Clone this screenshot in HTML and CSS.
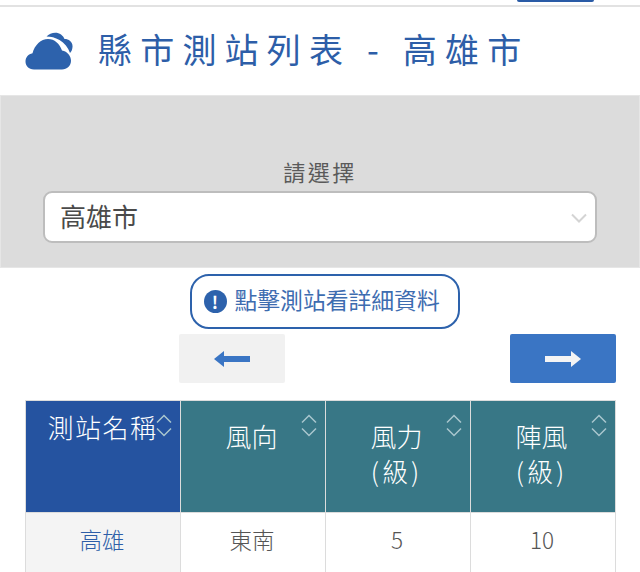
FILE: index.html
```html
<!DOCTYPE html>
<html lang="zh-Hant">
<head>
  <meta charset="UTF-8">
  <title>縣市測站列表 - 高雄市</title>
  <link rel="stylesheet" href="styles.css">
</head>
<body>
  <div class="topbar"><span class="topbar-tab"></span></div>

  <header class="page-head">
    <svg class="cloud" width="48" height="38" viewBox="0 0 48 38">
      <path d="M9 37.500C3.500 37.500 .5 33.500 .5 29.500C.5 25.500 3.500 22 7.500 21.300C9.500 13 16 7 23 7C29.500 7 34.500 11.500 37 18.500C42.500 19.500 46 24 46 28.800C46 34 42 37.500 37 37.500Z"/>
      <path d="M21.500 4.500C25 .5 32 -.5 36 2.500C38 4 39 5.500 39.500 7C44 7 48 10 47.500 15C47.300 17.500 46.500 19.500 45 21C43 15.500 39.500 11 34.500 8C30 5.500 26 4.500 21.500 4.500Z"/>
    </svg>
    <h1>縣市測站列表 - 高雄市</h1>
  </header>

  <section class="filter">
    <label class="filter-label" for="city">請選擇</label>
    <div class="select-wrap">
      <select id="city">
        <option>高雄市</option>
      </select>
      <svg class="select-arrow" width="16" height="10" viewBox="0 0 16 10"><path d="M1 1.500L8 8.500L15 1.500"/></svg>
    </div>
  </section>

  <div class="notice-row">
    <div class="notice">
      <span class="notice-icon">!</span>
      <span class="notice-text">點擊測站看詳細資料</span>
    </div>
  </div>

  <div class="pager">
    <button type="button" class="btn btn-prev">
      <svg width="36" height="16" viewBox="0 0 36 16"><path d="M0 8L10 0V5H36V11H10V16Z"/></svg>
    </button>
    <button type="button" class="btn btn-next">
      <svg width="36" height="16" viewBox="0 0 36 16"><path d="M36 8L26 0V5H0V11H26V16Z"/></svg>
    </button>
  </div>

  <table class="stations">
    <thead>
      <tr>
        <th class="col-name">測站名稱
          <svg class="sort" width="16" height="23" viewBox="0 0 16 23"><path d="M1 8.500L8 1.500L15 8.500M1 14.500L8 21.500L15 14.500"/></svg>
        </th>
        <th>風向
          <svg class="sort" width="16" height="23" viewBox="0 0 16 23"><path d="M1 8.500L8 1.500L15 8.500M1 14.500L8 21.500L15 14.500"/></svg>
        </th>
        <th>風力<br><span class="unit">(級)</span>
          <svg class="sort" width="16" height="23" viewBox="0 0 16 23"><path d="M1 8.500L8 1.500L15 8.500M1 14.500L8 21.500L15 14.500"/></svg>
        </th>
        <th>陣風<br><span class="unit">(級)</span>
          <svg class="sort" width="16" height="23" viewBox="0 0 16 23"><path d="M1 8.500L8 1.500L15 8.500M1 14.500L8 21.500L15 14.500"/></svg>
        </th>
      </tr>
    </thead>
    <tbody>
      <tr>
        <td class="station">高雄</td>
        <td>東南</td>
        <td>5</td>
        <td>10</td>
      </tr>
    </tbody>
  </table>
</body>
</html>
```

FILE: styles.css
```css
html, body { margin: 0; height: 572px; overflow: hidden; }
body { font-family: "Noto Sans CJK TC", "Noto Sans", sans-serif; background: #fff; color: #555; }

.topbar { height: 5px; border-bottom: 2px solid #e2e2e2; display: flex; justify-content: flex-end; padding-right: 46px; }
.topbar-tab { width: 77px; height: 2px; background: #2a5ba6; border-radius: 0 0 3px 3px; }

.page-head { height: 88px; display: flex; align-items: center; padding-left: 25px; color: #2d5ea8; }
.cloud { margin-right: 25px; fill: #2d62ac; }
.page-head h1 { margin: 0 0 4px; font-size: 34px; font-weight: 400; letter-spacing: 8.200px; white-space: nowrap; line-height: 40px; }

.filter { height: 173px; box-sizing: border-box; background: #dcdcdc; border: 1px solid #e6e6e6; padding: 59px 42px 0; text-align: center; }
.filter-label { display: block; font-size: 22px; line-height: 32px; letter-spacing: 2.500px; color: #5a5a5a; margin-bottom: 4px; }
.select-wrap { position: relative; }
.select-wrap select { display: block; width: 100%; height: 52px; box-sizing: border-box; appearance: none; background: #fff; border: 2px solid #bdbdbd; border-radius: 9px; padding: 0 15px 3px; font-family: inherit; font-size: 26px; color: #4a4a4a; }
.select-arrow { position: absolute; right: 10px; top: 22px; fill: none; stroke: #d4d4d4; stroke-width: 2; }

.notice-row { display: flex; justify-content: center; padding: 6px 0 0 9px; }
.notice { width: 270px; height: 55px; box-sizing: border-box; border: 2px solid #2d62ac; border-radius: 19px; display: flex; align-items: center; padding-left: 12px; gap: 8px; font-size: 22.800px; color: #3d6cb0; white-space: nowrap; }
.notice-text { margin-top: -4px; }
.notice-icon { width: 23px; height: 23px; border-radius: 50%; background: #2d62ac; color: #fff; font-size: 17px; font-weight: 700; line-height: 23px; text-align: center; flex: none; }

.pager { display: flex; justify-content: space-between; padding: 5px 24px 0 179px; }
.btn { width: 106px; height: 49px; border: none; border-radius: 2px; padding: 0; display: flex; align-items: center; justify-content: center; }
.btn-prev { background: #f1f1f1; fill: #3a75c4; }
.btn-next { background: #3a75c4; fill: #f4f4f4; }

.stations { width: 591px; margin: 17px 0 0 25px; border-collapse: collapse; table-layout: fixed; }
.stations th, .stations td { border: 1px solid #dcdcdc; text-align: center; box-sizing: border-box; }
.stations th { position: relative; height: 112px; background: #387786; color: #fff; font-size: 26px; font-weight: 300; line-height: 35px; padding: 17px 3px 0 0; vertical-align: top; }
.stations th.col-name { width: 155px; background: #2553a0; padding: 8px 1px 0 0; letter-spacing: 1.500px; }
.stations .unit { letter-spacing: 3px; }
.stations td { height: 60px; font-size: 22.500px; font-weight: 300; color: #555; padding: 0 2px 7px 0; }
.stations td.station { background: #f4f4f4; color: #2d5ea8; }
.sort { position: absolute; right: 8px; top: 13px; fill: none; stroke: #a9c6ce; stroke-width: 1.500; }
```
